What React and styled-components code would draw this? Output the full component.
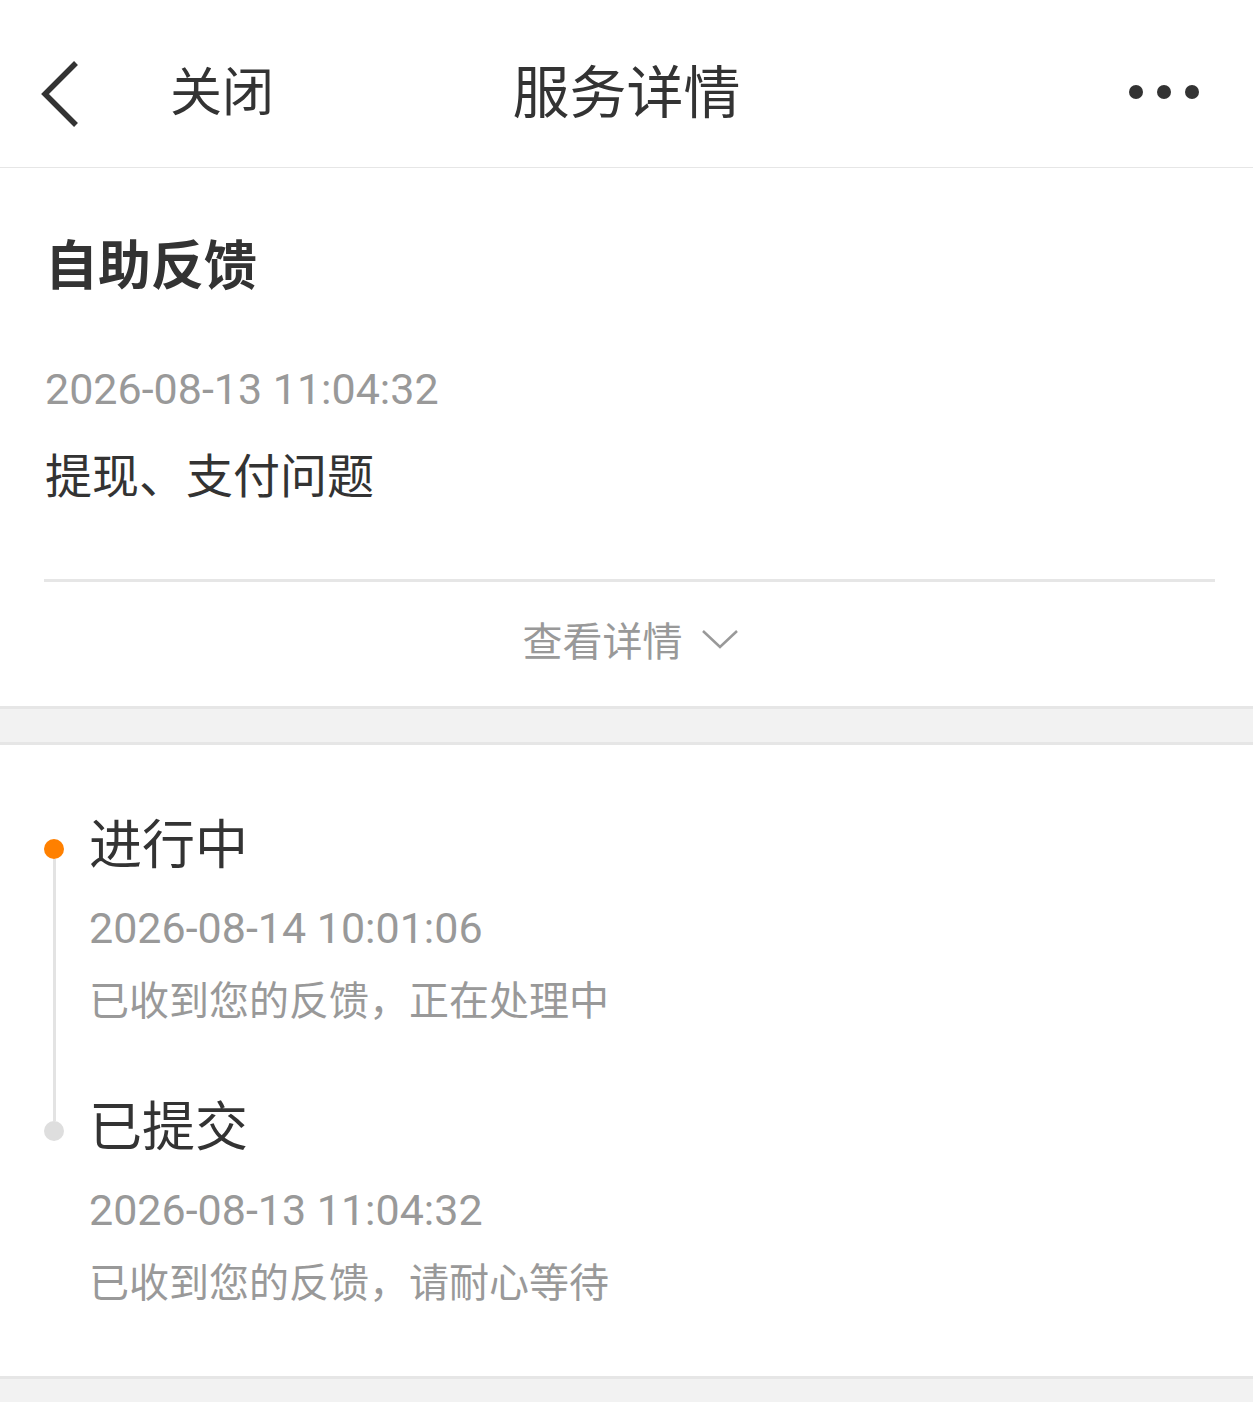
import React from 'react'
import styled, { createGlobalStyle } from 'styled-components'

const GlobalStyle = createGlobalStyle`
  html, body {
    margin: 0;
    padding: 0;
    background: #f2f2f2;
    font-family: Roboto, "Noto Sans CJK SC", "Noto Sans", sans-serif;
    color: #333;
  }
`

const Page = styled.div`
  width: 1253px;
  min-height: 1402px;
  background: #f2f2f2;
`

const Header = styled.header`
  box-sizing: border-box;
  height: 168px;
  padding-top: 20px;
  display: grid;
  grid-template-columns: 1fr auto 1fr;
  align-items: center;
  background: #fff;
  border-bottom: 1px solid #e6e6e6;
`

const HeaderLeft = styled.div`
  display: flex;
  align-items: center;
  padding-left: 38px;
`

const CloseText = styled.span`
  font-size: 52px;
  line-height: 1;
  margin-left: 88px;
  color: #333;
`

const Title = styled.h1`
  margin: 0;
  font-size: 57px;
  font-weight: 400;
  line-height: 1;
  color: #333;
`

const HeaderRight = styled.div`
  display: flex;
  justify-content: flex-end;
  padding: 0 53px 4px 0;
`

const Card = styled.section`
  background: #fff;
`

const CardBody = styled.div`
  padding: 63px 38px 0 45px;
`

const CardTitle = styled.h2`
  margin: 0;
  font-size: 53px;
  font-weight: 700;
  line-height: 72px;
  color: #333;
`

const DateText = styled.div`
  font-size: 43px;
  line-height: 50px;
  color: #999;
  margin-top: ${p => p.$top || 0}px;
`

const Topic = styled.div`
  font-size: 47px;
  line-height: 56px;
  margin-top: 35px;
  color: #333;
`

const Divider = styled.div`
  height: 3px;
  background: #e6e6e6;
  margin: 74px 38px 0 44px;
`

const MoreRow = styled.div`
  height: 124px;
  display: flex;
  align-items: center;
  justify-content: center;
  gap: 18px;
  font-size: 40px;
  color: #999;
  padding: 0 0 10px 8px;
  box-sizing: border-box;
`

const Band = styled.div`
  height: 33px;
  background: #f2f2f2;
  border-top: 3px solid #e6e6e6;
  border-bottom: 3px solid #e6e6e6;
`

const Timeline = styled.section`
  background: #fff;
  padding: 65px 38px 67px 44px;
  border-bottom: 3px solid #e6e6e6;
`

const Item = styled.div`
  display: flex;
  gap: 25px;
`

const Rail = styled.div`
  width: 20px;
  display: flex;
  flex-direction: column;
  align-items: center;
  flex-shrink: 0;
`

const RailLine = styled.div`
  width: 3px;
  background: ${p => (p.$blank ? 'transparent' : '#e3e3e3')};
  height: ${p => (p.$grow ? 'auto' : '29px')};
  flex: ${p => (p.$grow ? 1 : 'none')};
`

const Dot = styled.div`
  width: 20px;
  height: 20px;
  border-radius: 50%;
  flex-shrink: 0;
  background: ${p => (p.$active ? '#ff8000' : '#dedede')};
`

const ItemContent = styled.div`
  padding-bottom: ${p => (p.$last ? 0 : 65)}px;
`

const StepTitle = styled.div`
  font-size: 53px;
  line-height: 72px;
  color: #333;
`

const StepDesc = styled.div`
  font-size: 40px;
  line-height: 50px;
  color: #999;
  margin-top: 24px;
`

const BackIcon = () => (
  <svg width="44" height="70" viewBox="0 0 44 70">
    <path d="M38 4 L7 35 L38 66" fill="none" stroke="#333" strokeWidth="5.5" />
  </svg>
)

const MoreIcon = () => (
  <svg width="72" height="16" viewBox="0 0 72 16">
    <circle cx="8" cy="8" r="7" fill="#333" />
    <circle cx="36" cy="8" r="7" fill="#333" />
    <circle cx="64" cy="8" r="7" fill="#333" />
  </svg>
)

const ChevronDown = () => (
  <svg width="38" height="22" viewBox="0 0 38 22">
    <path d="M2 3 L19 19 L36 3" fill="none" stroke="#999" strokeWidth="2.5" />
  </svg>
)

const steps = [
  { title: '进行中', time: '2026-08-14 10:01:06', desc: '已收到您的反馈，正在处理中', active: true },
  { title: '已提交', time: '2026-08-13 11:04:32', desc: '已收到您的反馈，请耐心等待', active: false },
]

export default function App() {
  return (
    <Page>
      <GlobalStyle />
      <Header>
        <HeaderLeft>
          <BackIcon />
          <CloseText>关闭</CloseText>
        </HeaderLeft>
        <Title>服务详情</Title>
        <HeaderRight>
          <MoreIcon />
        </HeaderRight>
      </Header>

      <Card>
        <CardBody>
          <CardTitle>自助反馈</CardTitle>
          <DateText $top={61}>2026-08-13 11:04:32</DateText>
          <Topic>提现、支付问题</Topic>
        </CardBody>
        <Divider />
        <MoreRow>
          <span>查看详情</span>
          <ChevronDown />
        </MoreRow>
      </Card>

      <Band />

      <Timeline>
        {steps.map((s, i) => {
          const first = i === 0
          const last = i === steps.length - 1
          return (
            <Item key={s.title}>
              <Rail>
                <RailLine $blank={first} />
                <Dot $active={s.active} />
                {!last && <RailLine $grow />}
              </Rail>
              <ItemContent $last={last}>
                <StepTitle>{s.title}</StepTitle>
                <DateText $top={21}>{s.time}</DateText>
                <StepDesc>{s.desc}</StepDesc>
              </ItemContent>
            </Item>
          )
        })}
      </Timeline>
    </Page>
  )
}
